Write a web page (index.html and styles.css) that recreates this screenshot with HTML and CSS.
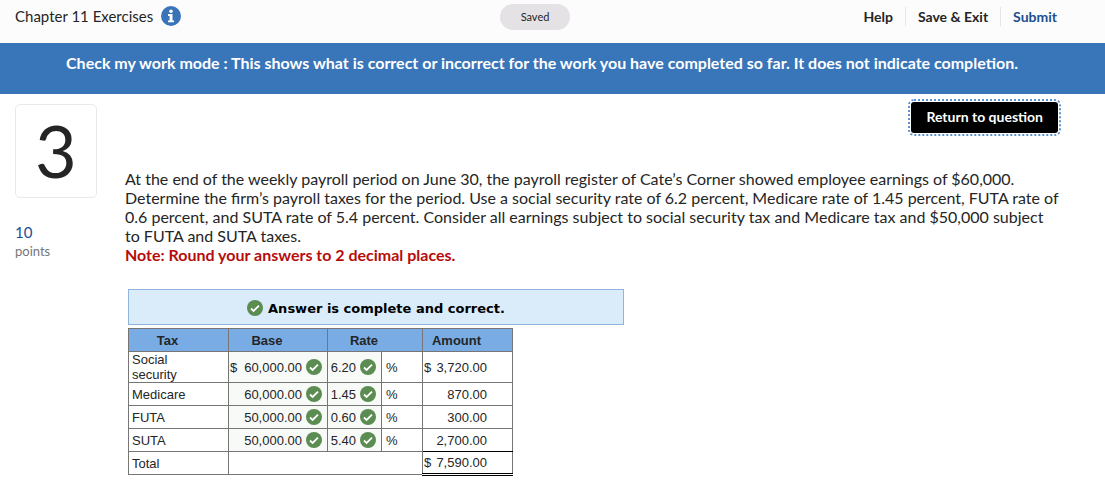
FILE: index.html
```html
<!DOCTYPE html>
<html lang="en">
<head>
<meta charset="utf-8">
<meta name="viewport" content="width=device-width, initial-scale=1">
<title>Chapter 11 Exercises</title>
<link rel="stylesheet" href="styles.css">
</head>
<body>
<svg class="sprite" aria-hidden="true">
  <symbol id="check" viewBox="0 0 16 16">
    <circle cx="8" cy="8" r="8" fill="#5b8c51"/>
    <path d="M4 8.5l2.6 2.4 5.4-5.3" fill="none" stroke="#fff" stroke-width="1.8"/>
  </symbol>
</svg>

<header class="topbar">
  <div class="topbar-title">
    <h1 class="title">Chapter 11 Exercises</h1>
    <button class="info" type="button" aria-label="Assignment information">
      <svg viewBox="0 0 20 20" width="20" height="20" aria-hidden="true">
        <circle cx="10" cy="10" r="10" fill="#3974b8"/>
        <circle cx="10" cy="5.2" r="1.8" fill="#fff"/>
        <path d="M7 8.1h4.5v6.3H13v1.8H7v-1.8h1.6V9.9H7z" fill="#fff"/>
      </svg>
    </button>
  </div>
  <span class="saved">Saved</span>
  <nav class="actions">
    <button class="action" type="button">Help</button>
    <button class="action" type="button">Save &amp; Exit</button>
    <button class="action action-submit" type="button">Submit</button>
  </nav>
</header>

<p class="banner">Check my work mode : This shows what is correct or incorrect for the work you have completed so far. It does not indicate completion.</p>

<main class="page">
  <aside class="side">
    <div class="number">3</div>
    <div class="points">10</div>
    <div class="points-label">points</div>
  </aside>
  <section class="content">
    <div class="return-row">
      <button class="return" type="button">Return to question</button>
    </div>
    <p class="question">At the end of the weekly payroll period on June 30, the payroll register of Cate’s Corner showed employee earnings of $60,000. Determine the firm’s payroll taxes for the period. Use a social security rate of 6.2 percent, Medicare rate of 1.45 percent, FUTA rate of 0.6 percent, and SUTA rate of 5.4 percent. Consider all earnings subject to social security tax and Medicare tax and $50,000 subject to FUTA and SUTA taxes.</p>
    <p class="note">Note: Round your answers to 2 decimal places.</p>

    <div class="answer">
      <div class="status"><svg class="check"><use href="#check"/></svg>Answer is complete and correct.</div>
      <table class="taxes">
        <colgroup><col class="col-tax"><col class="col-base"><col class="col-rate"><col class="col-unit"><col class="col-amount"></colgroup>
        <thead>
          <tr><th>Tax</th><th>Base</th><th colspan="2">Rate</th><th>Amount</th></tr>
        </thead>
        <tbody>
          <tr class="tall">
            <td>Social<br>security</td>
            <td class="entry"><div class="value"><span class="currency">$</span>60,000.00<svg class="check"><use href="#check"/></svg></div></td>
            <td class="entry"><div class="value">6.20<svg class="check"><use href="#check"/></svg></div></td>
            <td class="unit">%</td>
            <td class="amount"><div class="value"><span class="currency">$</span>3,720.00</div></td>
          </tr>
          <tr>
            <td>Medicare</td>
            <td class="entry"><div class="value">60,000.00<svg class="check"><use href="#check"/></svg></div></td>
            <td class="entry"><div class="value">1.45<svg class="check"><use href="#check"/></svg></div></td>
            <td class="unit">%</td>
            <td class="amount"><div class="value">870.00</div></td>
          </tr>
          <tr>
            <td>FUTA</td>
            <td class="entry"><div class="value">50,000.00<svg class="check"><use href="#check"/></svg></div></td>
            <td class="entry"><div class="value">0.60<svg class="check"><use href="#check"/></svg></div></td>
            <td class="unit">%</td>
            <td class="amount"><div class="value">300.00</div></td>
          </tr>
          <tr>
            <td>SUTA</td>
            <td class="entry"><div class="value">50,000.00<svg class="check"><use href="#check"/></svg></div></td>
            <td class="entry"><div class="value">5.40<svg class="check"><use href="#check"/></svg></div></td>
            <td class="unit">%</td>
            <td class="amount last"><div class="value">2,700.00</div></td>
          </tr>
          <tr>
            <td>Total</td>
            <td colspan="3"></td>
            <td class="amount total"><div class="value"><span class="currency">$</span>7,590.00</div></td>
          </tr>
        </tbody>
      </table>
    </div>
  </section>
</main>
</body>
</html>
```

FILE: styles.css
```css
* {
  box-sizing: border-box;
}

body {
  margin: 0;
  background: #fff;
  color: #252525;
  font-family: Lato, "Liberation Sans", sans-serif;
  font-size: 16px;
  line-height: 19px;
}

button {
  margin: 0;
  padding: 0;
  border: 0;
  background: none;
  color: inherit;
  font: inherit;
  cursor: pointer;
}

.sprite {
  display: none;
}

.topbar {
  display: grid;
  grid-template-columns: 1fr auto 1fr;
  align-items: start;
  min-height: 43px;
  padding: 4px 50px 0 15px;
  background: #fcfcfc;
}

.topbar-title {
  display: flex;
  align-items: center;
  gap: 8px;
  padding-top: 2px;
}

.title {
  margin: 0;
  font-size: 15px;
  font-weight: 400;
}

.info {
  display: flex;
}

.saved {
  width: 70px;
  border-radius: 13px;
  background: #e4e2e5;
  font-size: 11px;
  line-height: 26px;
  text-align: center;
}

.actions {
  display: flex;
  justify-content: flex-end;
  margin-right: -14px;
  padding-top: 3px;
}

.action {
  padding: 0 12px;
  font-size: 14px;
  font-weight: 700;
  line-height: 19px;
}

.action + .action {
  border-left: 1px solid #e6e6e6;
}

.action-submit {
  color: #1b4f91;
}

.banner {
  margin: 0;
  min-height: 51px;
  padding: 10px 36px 20px 15px;
  background: #3875b9;
  color: #fff;
  font-weight: 700;
  line-height: 20px;
  text-align: center;
}

.page {
  display: flex;
  gap: 28px;
  padding: 5px 44px 24px 15px;
}

.side {
  flex: none;
  width: 82px;
  padding-top: 5px;
}

.number {
  height: 94px;
  margin-bottom: 25px;
  border: 1px solid #e9e9e9;
  border-radius: 5px;
  font-size: 72px;
  line-height: 90px;
  text-align: center;
}

.points {
  color: #1b4f91;
  font-size: 15px;
}

.points-label {
  color: #767676;
  font-size: 13px;
}

.content {
  flex: 1;
  min-width: 0;
}

.return-row {
  display: flex;
  justify-content: flex-end;
  margin-bottom: 33px;
}

.return {
  padding: 6px 15px 8px;
  border: 3px solid transparent;
  border-radius: 6px;
  outline: 2px dotted #5c91cd;
  outline-offset: -2px;
  background: #000;
  background-clip: padding-box;
  color: #fff;
  font-size: 14px;
  font-weight: 700;
  line-height: 17px;
}

.question,
.note {
  margin: 0;
}

.note {
  color: #b60c0c;
  font-weight: 700;
}

.answer {
  max-width: 499px;
  padding: 25px 0 0 3px;
  font-family: "Liberation Sans", Arial, sans-serif;
  font-size: 13px;
  line-height: 15px;
}

.check {
  flex: none;
  width: 16px;
  height: 16px;
}

.status {
  display: flex;
  align-items: center;
  justify-content: center;
  gap: 5px;
  height: 36px;
  margin-bottom: 3px;
  padding-top: 2px;
  border: 1px solid #8fb5de;
  background: #daecfa;
  color: #000;
  font-family: "DejaVu Sans", Verdana, sans-serif;
  font-weight: 700;
}

.taxes {
  width: 385px;
  border-collapse: collapse;
  table-layout: fixed;
}

.col-tax { width: 100px; }
.col-base { width: 99px; }
.col-rate { width: 54px; }
.col-unit { width: 41px; }

.taxes tr {
  height: 23px;
}

.taxes .tall {
  height: 31px;
}

.taxes th,
.taxes td {
  padding: 0 3px;
  border: 1px solid #767676;
  text-align: left;
}

.taxes th {
  padding-right: 25px;
  background: #79ace5;
  text-align: center;
}

.taxes .entry {
  padding: 0 5px 0 1px;
  background: #f7faf7;
}

.taxes .unit {
  padding-left: 4px;
}

.taxes .amount {
  padding: 0 25px 0 1px;
}

.taxes .last {
  border-bottom-color: #000;
}

.taxes .total {
  border-bottom: 3px double #000;
}

.value {
  display: flex;
  align-items: center;
  justify-content: flex-end;
  gap: 4px;
}

.currency {
  margin-right: auto;
}
```
